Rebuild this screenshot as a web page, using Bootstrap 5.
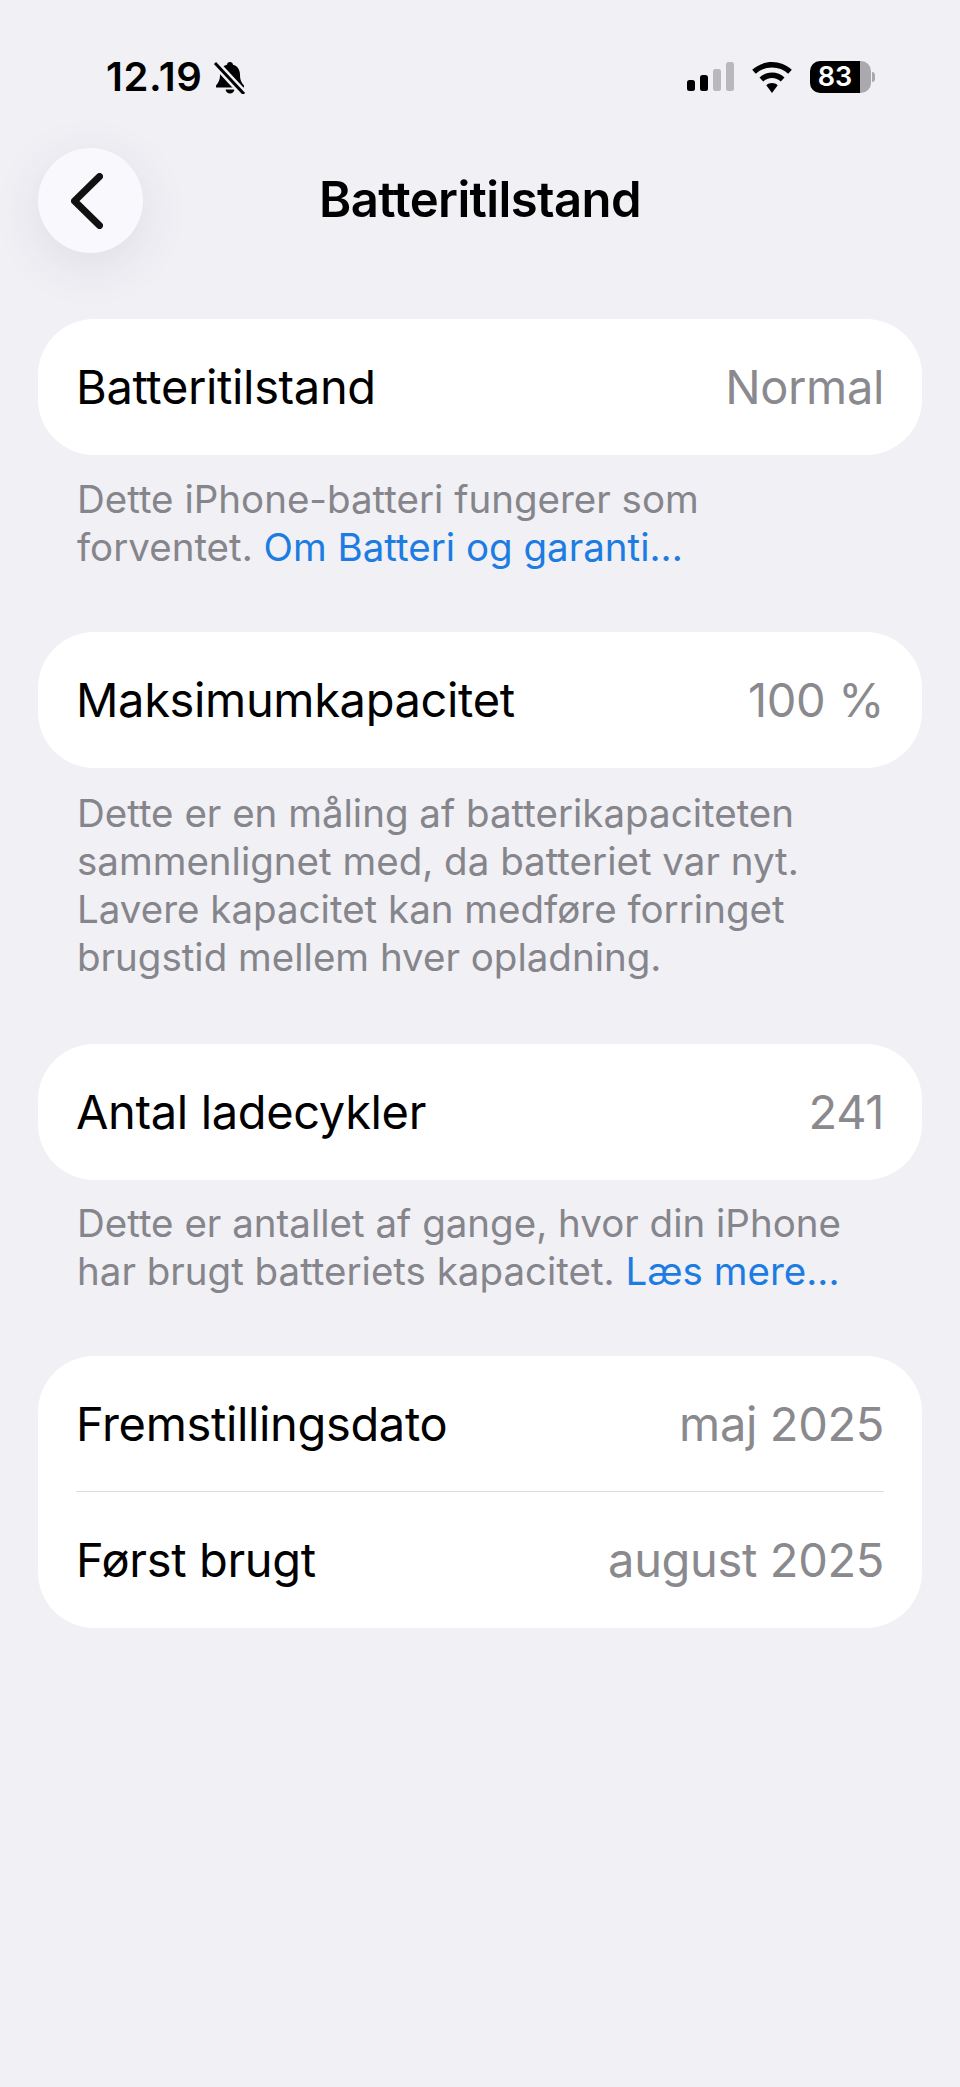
<!DOCTYPE html>
<html lang="da">
<head>
    <title>Batteritilstand</title>
    <meta charset="UTF-8">
    <link href="https://cdn.jsdelivr.net/npm/bootstrap@5.3.0/dist/css/bootstrap.min.css" rel="stylesheet">
    <style>
        body { background: #f0f0f5; font-family: Inter, "Liberation Sans", sans-serif; width: 960px; height: 2087px; overflow: hidden; color: #000; }
        .status-row { height: 148px; padding: 52px 85px 0 106px; align-items: flex-start; }
        .status-time { font-size: 40px; font-weight: 600; line-height: 50px; letter-spacing: 0.6px; }
        .status-left { gap: 10px; }
        .status-icons { height: 50px; gap: 18px; }
        .batt-num { width: 50px; height: 32px; background: #000; color: #fff; border-radius: 10px 0 0 10px; font-size: 27px; font-weight: 600; line-height: 32px; text-align: center; }
        .batt-rest { width: 11px; height: 32px; background: #aaaaae; border-radius: 0 10px 10px 0; }
        .batt-tip { width: 3px; height: 10px; background: #aaaaae; border-radius: 0 4px 4px 0; margin-left: 1px; }
        .head-row { height: 171px; padding-left: 38px; }
        .back-btn { width: 105px; height: 105px; border-radius: 50%; background: #f9f9fd; box-shadow: 0 12px 50px rgba(60, 60, 80, .1); }
        .head-title { font-size: 49px; font-weight: 600; letter-spacing: -0.6px; line-height: 56px; top: 24px; left: 0; right: 0; }
        .group-box { margin: 0 38px; background: #fff; border-radius: 56px; padding: 0 38px; }
        .group-row { height: 136px; font-size: 47px; letter-spacing: -0.35px; padding-top: 1px; }
        .group-row.row-top { height: 135px; }
        .group-row.row-bottom { height: 137px; border-top: 1px solid #dcdce0; }
        .row-val { color: #8a8a8e; }
        .group-note { margin: 0; padding: 20px 76px 0 77px; font-size: 38.5px; line-height: 48px; color: #85858b; }
        .group-note a { color: #1c7ce2; text-decoration: none; }
        .note-1 { height: 177px; }
        .note-2 { height: 276px; padding-top: 21px; }
        .note-3 { height: 176px; padding-top: 19px; }
    </style>
</head>
<body>
<div class="d-flex justify-content-between status-row">
    <div class="d-flex align-items-center status-left">
        <span class="status-time">12.19</span>
        <svg width="34" height="34" viewBox="0 0 34 34">
            <path d="M17 2c1.700 0 3 1.200 3 2.700 4.500 1.200 7 5 7 9.800 0 5 1 7.500 4 11v2H3v-2c3-3.500 4-6 4-11 0-4.800 2.500-8.600 7-9.800C14 3.200 15.300 2 17 2z" fill="#000"/>
            <path d="M12.500 29.500h9c-.5 2.500-2.300 4-4.500 4s-4-1.500-4.500-4z" fill="#000"/>
            <path d="M2 3l29 31" stroke="#f0f0f5" stroke-width="8"/>
            <path d="M2 3l29 31" stroke="#000" stroke-width="3"/>
        </svg>
    </div>
    <div class="d-flex align-items-center status-icons">
        <svg width="47" height="30" viewBox="0 0 47 30">
            <rect x="0" y="18" width="8" height="11" rx="2.500" fill="#000"/>
            <rect x="13" y="13" width="8" height="16" rx="2.500" fill="#000"/>
            <rect x="26" y="7" width="8" height="22" rx="2.500" fill="#b9b9bd"/>
            <rect x="39" y="0" width="8" height="29" rx="2.500" fill="#b9b9bd"/>
        </svg>
        <svg width="40" height="31" viewBox="0 0 40 31">
            <path d="M20 0c7.500 0 14.500 2.900 19.800 7.800l-3.600 3.900C31.800 7.600 26.100 5.400 20 5.400S8.200 7.600 3.800 11.700L.2 7.800C5.500 2.900 12.500 0 20 0z" fill="#000"/>
            <path d="M20 10.500c4.700 0 9.100 1.800 12.500 5l-3.700 3.900c-2.400-2.300-5.500-3.500-8.800-3.500s-6.400 1.200-8.800 3.500l-3.700-3.900c3.400-3.200 7.800-5 12.500-5z" fill="#000"/>
            <path d="M20 21c2.200 0 4.200.8 5.700 2.200L20 31l-5.700-7.800C15.800 21.800 17.800 21 20 21z" fill="#000"/>
        </svg>
        <div class="d-flex align-items-center">
            <div class="batt-num">83</div>
            <div class="batt-rest"></div>
            <div class="batt-tip"></div>
        </div>
    </div>
</div>
<div class="head-row position-relative">
    <div class="back-btn d-flex align-items-center justify-content-center">
        <svg class="me-2" width="32" height="56" viewBox="0 0 32 56">
            <path d="M28.500 3.500L3.500 28l25 24.500" fill="none" stroke="#111" stroke-width="7" stroke-linecap="round" stroke-linejoin="round"/>
        </svg>
    </div>
    <div class="head-title position-absolute text-center">Batteritilstand</div>
</div>

<div class="group-box">
    <div class="group-row d-flex justify-content-between align-items-center"><span>Batteritilstand</span><span class="row-val">Normal</span></div>
</div>
<p class="group-note note-1">Dette iPhone-batteri fungerer som forventet. <a href="#">Om Batteri og garanti...</a></p>

<div class="group-box">
    <div class="group-row d-flex justify-content-between align-items-center"><span>Maksimumkapacitet</span><span class="row-val">100 %</span></div>
</div>
<p class="group-note note-2">Dette er en måling af batterikapaciteten sammenlignet med, da batteriet var nyt. Lavere kapacitet kan medføre forringet brugstid mellem hver opladning.</p>

<div class="group-box">
    <div class="group-row d-flex justify-content-between align-items-center"><span>Antal ladecykler</span><span class="row-val">241</span></div>
</div>
<p class="group-note note-3">Dette er antallet af gange, hvor din iPhone har brugt batteriets kapacitet. <a href="#">Læs mere...</a></p>

<div class="group-box">
    <div class="group-row row-top d-flex justify-content-between align-items-center"><span>Fremstillingsdato</span><span class="row-val">maj 2025</span></div>
    <div class="group-row row-bottom d-flex justify-content-between align-items-center"><span>Først brugt</span><span class="row-val">august 2025</span></div>
</div>

<script src="https://cdn.jsdelivr.net/npm/bootstrap@5.3.0/dist/js/bootstrap.bundle.min.js"></script>
</body>
</html>
